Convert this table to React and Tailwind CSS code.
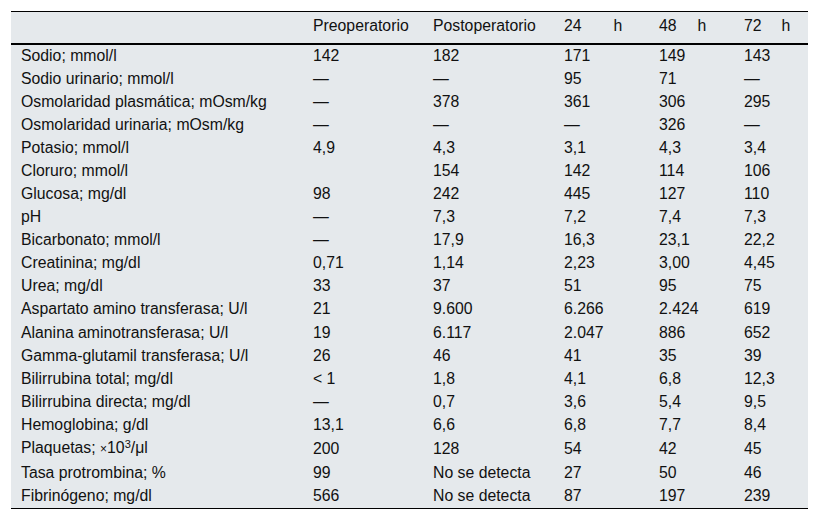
import React from 'react'

const rows = [
  ['Sodio; mmol/l', '142', '182', '171', '149', '143'],
  ['Sodio urinario; mmol/l', '—', '—', '95', '71', '—'],
  ['Osmolaridad plasmática; mOsm/kg', '—', '378', '361', '306', '295'],
  ['Osmolaridad urinaria; mOsm/kg', '—', '—', '—', '326', '—'],
  ['Potasio; mmol/l', '4,9', '4,3', '3,1', '4,3', '3,4'],
  ['Cloruro; mmol/l', '', '154', '142', '114', '106'],
  ['Glucosa; mg/dl', '98', '242', '445', '127', '110'],
  ['pH', '—', '7,3', '7,2', '7,4', '7,3'],
  ['Bicarbonato; mmol/l', '—', '17,9', '16,3', '23,1', '22,2'],
  ['Creatinina; mg/dl', '0,71', '1,14', '2,23', '3,00', '4,45'],
  ['Urea; mg/dl', '33', '37', '51', '95', '75'],
  ['Aspartato amino transferasa; U/l', '21', '9.600', '6.266', '2.424', '619'],
  ['Alanina aminotransferasa; U/l', '19', '6.117', '2.047', '886', '652'],
  ['Gamma-glutamil transferasa; U/l', '26', '46', '41', '35', '39'],
  ['Bilirrubina total; mg/dl', '< 1', '1,8', '4,1', '6,8', '12,3'],
  ['Bilirrubina directa; mg/dl', '—', '0,7', '3,6', '5,4', '9,5'],
  ['Hemoglobina; g/dl', '13,1', '6,6', '6,8', '7,7', '8,4'],
  [
    <span key="p">
      Plaquetas; <span className="text-[12px]">×</span>10<sup className="text-[11px]">3</sup>/μl
    </span>,
    '200', '128', '54', '42', '45',
  ],
  ['Tasa protrombina; %', '99', 'No se detecta', '27', '50', '46'],
  ['Fibrinógeno; mg/dl', '566', 'No se detecta', '87', '197', '239'],
]

export default function App() {
  return (
    <div className="bg-white w-[819px] h-[522px] pt-[11px] pl-[11px]" style={{ fontFamily: '"Liberation Sans", Arial, sans-serif' }}>
      <table className="table-fixed border-collapse bg-[#e5e9ec] text-[#111] text-[15.8px] w-[797px]">
        <colgroup>
          <col className="w-[292px]" />
          <col className="w-[120px]" />
          <col className="w-[131px]" />
          <col className="w-[95px]" />
          <col className="w-[85px]" />
          <col className="w-[74px]" />
        </colgroup>
        <thead>
          <tr className="border-t border-black border-b-2 h-[32px]">
            <th className="px-[10px] pb-[2px] font-normal text-left"></th>
            <th className="px-[10px] pb-[2px] font-normal text-left">Preoperatorio</th>
            <th className="px-[10px] pb-[2px] font-normal text-left">Postoperatorio</th>
            <th className="px-[10px] pb-[2px] font-normal text-left">24<span className="ml-[32px]">h</span></th>
            <th className="px-[10px] pb-[2px] font-normal text-left">48<span className="ml-[21px]">h</span></th>
            <th className="px-[10px] pb-[2px] font-normal text-left">72<span className="ml-[20px]">h</span></th>
          </tr>
        </thead>
        <tbody className="border-b border-black">
          {rows.map((r, i) => (
            <tr key={i} className="h-[23.1px]">
              {r.map((c, j) => (
                <td key={j} className="px-[10px] pt-0 pb-[2px] leading-[21px] whitespace-nowrap">
                  {c}
                </td>
              ))}
            </tr>
          ))}
        </tbody>
      </table>
    </div>
  )
}
